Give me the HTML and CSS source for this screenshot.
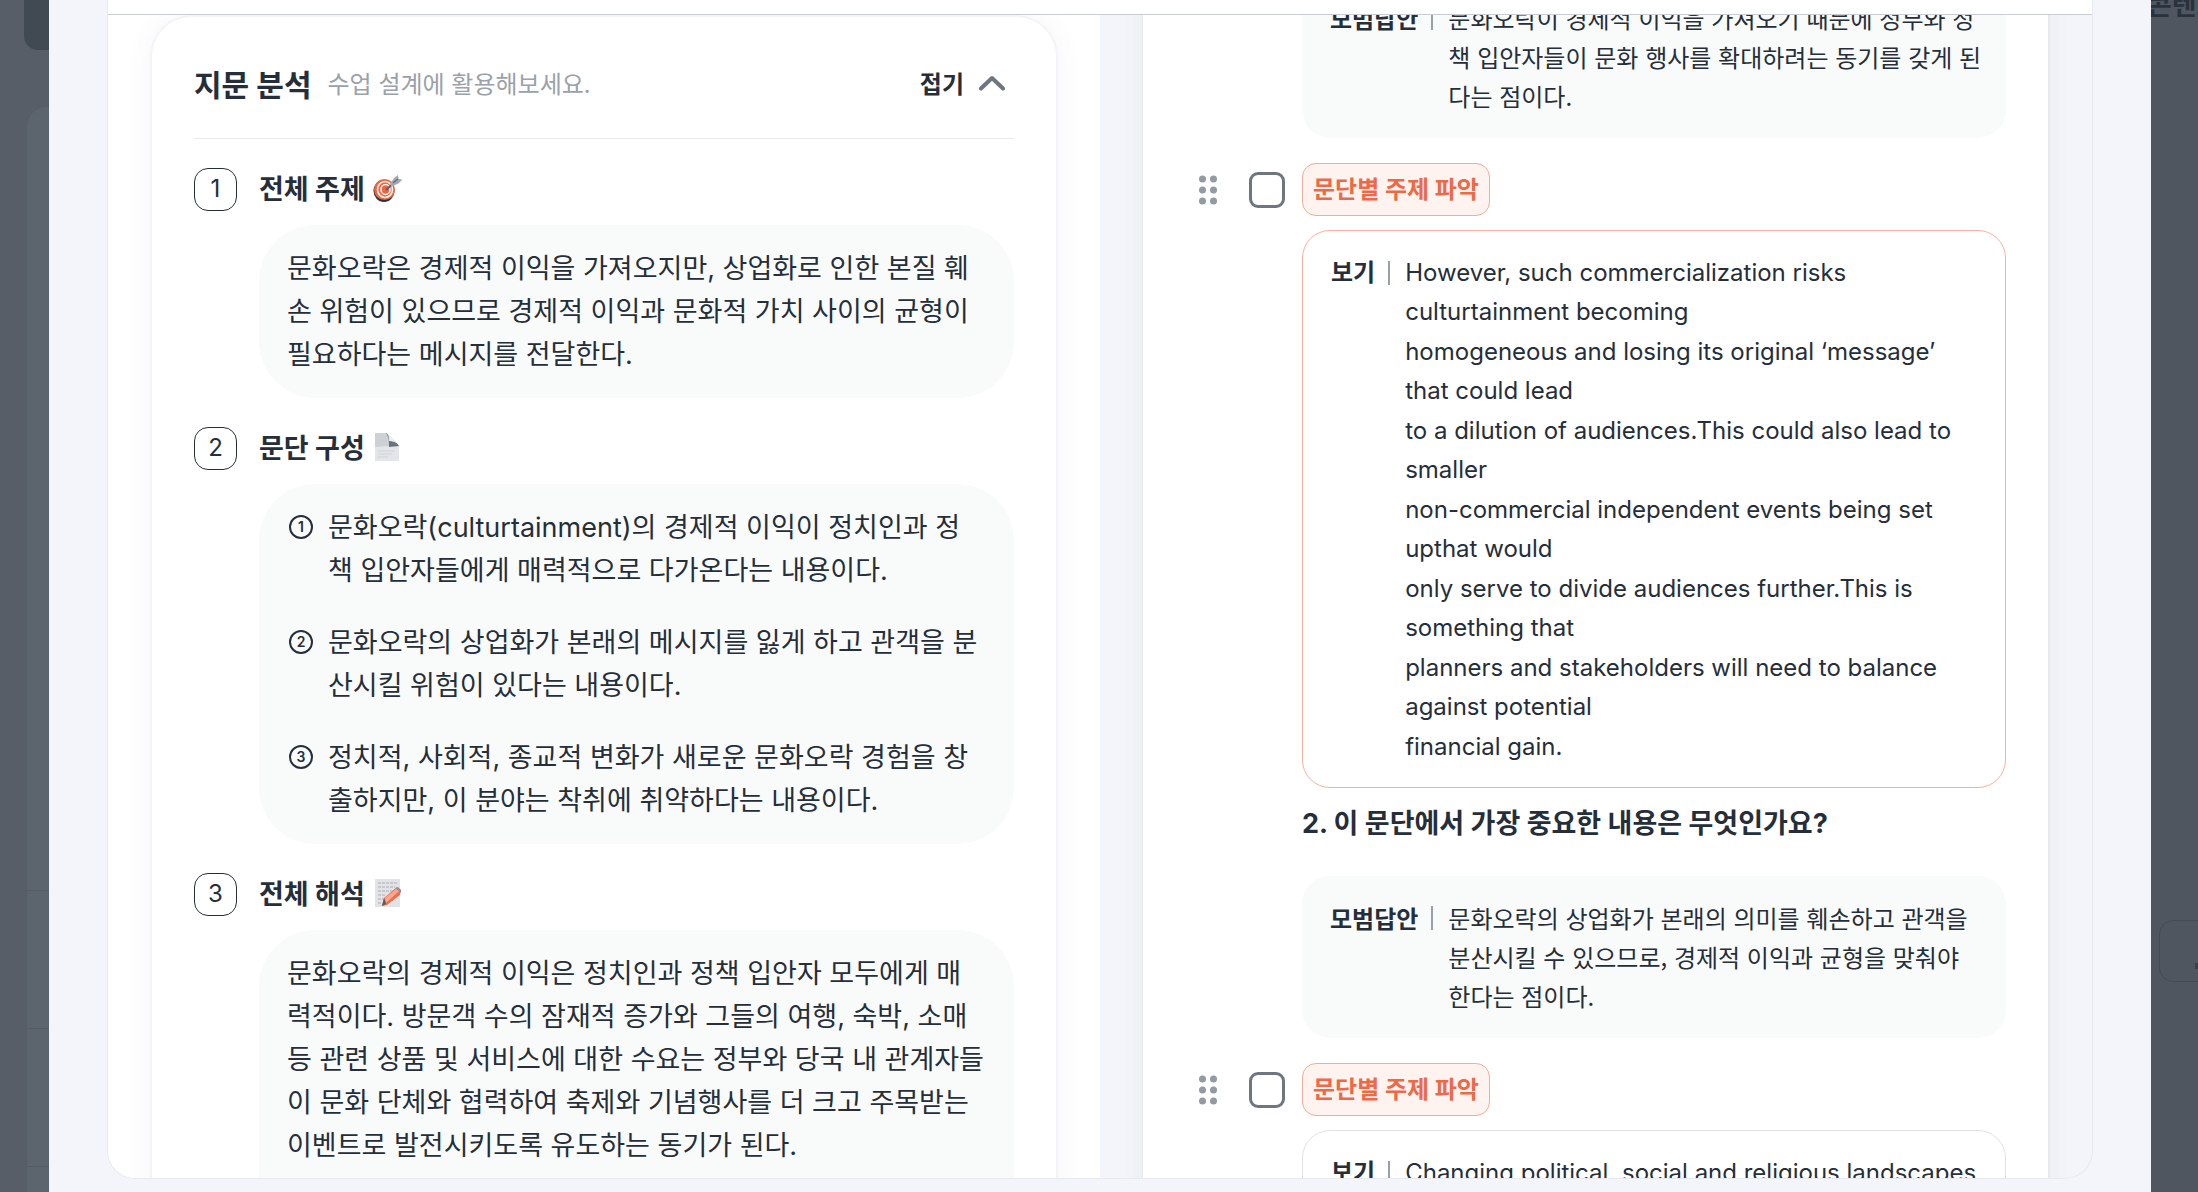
FILE: index.html
```html
<!DOCTYPE html>
<html lang="ko">
<head>
<meta charset="utf-8">
<meta name="viewport" content="width=device-width, initial-scale=1">
<title>지문 분석</title>
<link rel="stylesheet" href="styles.css">
</head>
<body>
<div class="screen">
  <div class="backdrop backdrop-left">
    <div class="dim-block"></div>
    <div class="dim-card">
      <div class="dim-row dim-row-tall"></div>
      <div class="dim-row"></div>
      <div class="dim-row"></div>
    </div>
  </div>

  <main class="modal">
    <div class="frame">
      <div class="frame-header"></div>
      <div class="columns">
        <section class="column column-left">
          <article class="card analysis">
            <header class="analysis-header">
              <h1 class="analysis-title">지문 분석</h1>
              <p class="analysis-hint">수업 설계에 활용해보세요.</p>
              <button class="fold" type="button">접기
                <svg class="chevron" viewBox="0 0 28 16" aria-hidden="true"><path d="M3 13.500L14 3l11 10.500" fill="none" stroke="#6d7681" stroke-width="4" stroke-linecap="round" stroke-linejoin="round"/></svg>
              </button>
            </header>
            <div class="sections">
              <section class="section">
                <span class="number">1</span>
                <h2 class="section-title">전체 주제
                  <svg class="emoji" viewBox="0 0 30 30" aria-hidden="true">
                    <ellipse cx="11" cy="18" rx="10.500" ry="11" fill="#2b333d"/>
                    <ellipse cx="11.500" cy="16.500" rx="10.500" ry="10.500" fill="#ee6540"/>
                    <ellipse cx="12" cy="16.500" rx="7.500" ry="8" fill="none" stroke="#fdf3ef" stroke-width="1.600"/>
                    <ellipse cx="12.500" cy="16.500" rx="4.500" ry="5" fill="none" stroke="#fdf3ef" stroke-width="1.600"/>
                    <path d="M13 17L23 8" stroke="#59636f" stroke-width="2"/>
                    <path d="M17 11l4-6 4-3 .500 4 4 .500-4 4-7 3z" fill="#a3aab3"/>
                    <path d="M20 10l5-4" stroke="#606a75" stroke-width="1.200"/>
                  </svg>
                </h2>
                <div class="note">
                  <p>문화오락은 경제적 이익을 가져오지만, 상업화로 인한 본질 훼<br>손 위험이 있으므로 경제적 이익과 문화적 가치 사이의 균형이<br>필요하다는 메시지를 전달한다.</p>
                </div>
              </section>

              <section class="section">
                <span class="number">2</span>
                <h2 class="section-title">문단 구성
                  <svg class="emoji" viewBox="0 0 30 30" aria-hidden="true">
                    <path d="M2 1h12l12 13v15H2z" fill="#e3e5e8"/>
                    <path d="M2 1h11c3 3 3 8 3 13L2 15z" fill="#cdd1d6"/>
                    <path d="M13 1c3 1 3 5 3 8 4 0 8 1 10 5l-10 1c0-6 0-10-3-14z" fill="#69727d"/>
                    <path d="M14 1l12 11c-3-2-6-3-9-3 0-3-1-6-3-8z" fill="#edeff1"/>
                    <path d="M5 19h17M5 22h14M5 25h10" stroke="#d0d3d8" stroke-width="1"/>
                  </svg>
                </h2>
                <ol class="note points">
                  <li class="point"><span class="ring">1</span><p>문화오락(culturtainment)의 경제적 이익이 정치인과 정<br>책 입안자들에게 매력적으로 다가온다는 내용이다.</p></li>
                  <li class="point"><span class="ring">2</span><p>문화오락의 상업화가 본래의 메시지를 잃게 하고 관객을 분<br>산시킬 위험이 있다는 내용이다.</p></li>
                  <li class="point"><span class="ring">3</span><p>정치적, 사회적, 종교적 변화가 새로운 문화오락 경험을 창<br>출하지만, 이 분야는 착취에 취약하다는 내용이다.</p></li>
                </ol>
              </section>

              <section class="section">
                <span class="number">3</span>
                <h2 class="section-title">전체 해석
                  <svg class="emoji" viewBox="0 0 30 30" aria-hidden="true">
                    <path d="M2 1h25v28H2z" fill="#e1e3e6"/>
                    <path d="M5 5h19M5 9h17M5 13h15M5 17h8M5 21h6M5 25h4" stroke="#a9afb7" stroke-width="1" stroke-dasharray="3 1"/>
                    <path d="M9 28l2-8L24 9l4 3-1 5-13 10z" fill="#ee6f4c"/>
                    <path d="M12 20L23 11l3 2-13 12z" fill="#fba68e"/>
                    <path d="M9 28l2-8 2 6z" fill="#525b66"/>
                    <path d="M23 10l2-1 3 3v3z" fill="#8d949d"/>
                  </svg>
                </h2>
                <div class="note note-open">
                  <p>문화오락의 경제적 이익은 정치인과 정책 입안자 모두에게 매<br>력적이다. 방문객 수의 잠재적 증가와 그들의 여행, 숙박, 소매<br>등 관련 상품 및 서비스에 대한 수요는 정부와 당국 내 관계자들<br>이 문화 단체와 협력하여 축제와 기념행사를 더 크고 주목받는<br>이벤트로 발전시키도록 유도하는 동기가 된다.</p>
                </div>
              </section>
            </div>
          </article>
        </section>

        <section class="column column-right">
          <div class="card questions">
            <article class="question question-scrolled">
              <div class="answer">
                <strong class="label">모범답안</strong>
                <p>문화오락이 경제적 이익을 가져오기 때문에 정부와 정<br>책 입안자들이 문화 행사를 확대하려는 동기를 갖게 된<br>다는 점이다.</p>
              </div>
            </article>

            <article class="question">
              <svg class="handle" viewBox="0 0 18 30" aria-hidden="true"><g fill="#929aa4"><circle cx="3.500" cy="4" r="3.500"/><circle cx="14.500" cy="4" r="3.500"/><circle cx="3.500" cy="15" r="3.500"/><circle cx="14.500" cy="15" r="3.500"/><circle cx="3.500" cy="26" r="3.500"/><circle cx="14.500" cy="26" r="3.500"/></g></svg>
              <input class="check" type="checkbox" id="question-2">
              <label class="tag" for="question-2">문단별 주제 파악</label>
              <div class="quote quote-active">
                <strong class="label">보기</strong>
                <div class="passage" lang="en">
                  <p>However, such commercialization risks<br>culturtainment becoming</p>
                  <p>homogeneous and losing its original ‘message’<br>that could lead</p>
                  <p>to a dilution of audiences.This could also lead to<br>smaller</p>
                  <p>non-commercial independent events being set<br>upthat would</p>
                  <p>only serve to divide audiences further.This is<br>something that</p>
                  <p>planners and stakeholders will need to balance<br>against potential</p>
                  <p>financial gain.</p>
                </div>
              </div>
              <h2 class="prompt">2. 이 문단에서 가장 중요한 내용은 무엇인가요?</h2>
              <div class="answer">
                <strong class="label">모범답안</strong>
                <p>문화오락의 상업화가 본래의 의미를 훼손하고 관객을<br>분산시킬 수 있으므로, 경제적 이익과 균형을 맞춰야<br>한다는 점이다.</p>
              </div>
            </article>

            <article class="question">
              <svg class="handle" viewBox="0 0 18 30" aria-hidden="true"><g fill="#929aa4"><circle cx="3.500" cy="4" r="3.500"/><circle cx="14.500" cy="4" r="3.500"/><circle cx="3.500" cy="15" r="3.500"/><circle cx="14.500" cy="15" r="3.500"/><circle cx="3.500" cy="26" r="3.500"/><circle cx="14.500" cy="26" r="3.500"/></g></svg>
              <input class="check" type="checkbox" id="question-3">
              <label class="tag" for="question-3">문단별 주제 파악</label>
              <div class="quote">
                <strong class="label">보기</strong>
                <div class="passage" lang="en">
                  <p>Changing political, social and religious landscapes</p>
                </div>
              </div>
            </article>
          </div>
        </section>
      </div>
    </div>
  </main>

  <div class="backdrop backdrop-right">
    <p class="dim-heading">콘텐츠</p>
    <div class="dim-button"><span class="dim-glyph"></span></div>
  </div>
</div>
</body>
</html>
```
FILE: styles.css
```css
* {
  box-sizing: border-box;
}

body,
h1,
h2,
p,
ol {
  margin: 0;
  padding: 0;
}

body {
  font-family: Inter, "Noto Sans CJK KR", sans-serif;
  font-size: 24px;
  color: #252e39;
  background: #555d66;
}

.screen {
  display: flex;
  height: 100vh;
  overflow: hidden;
}

/* Dimmed page behind the modal */
.backdrop {
  flex: none;
  display: flex;
  flex-direction: column;
  overflow: hidden;
}

.backdrop-left {
  width: 49px;
  padding-left: 24px;
  background: #575e67;
}

.backdrop-right {
  width: 47px;
  background: #4f5660;
}

.dim-block {
  height: 50px;
  flex: none;
  border-bottom-left-radius: 14px;
  background: #414952;
}

.dim-card {
  flex: 1;
  margin: 57px 0 0 3px;
  border-top-left-radius: 20px;
  background: #5c646d;
}

.dim-row {
  height: 138px;
  border-bottom: 1px solid #555c65;
}

.dim-row-tall {
  height: 784px;
}

.dim-heading {
  width: 120px;
  margin: -14px 0 0 -4px;
  font-size: 27px;
  font-weight: 700;
  line-height: 40px;
  color: #29323d;
}

.dim-button {
  flex: none;
  display: flex;
  align-items: center;
  width: 120px;
  height: 62px;
  margin: 894px 0 0 8px;
  padding: 30px 0 0 35px;
  border: 1px solid #434b55;
  border-radius: 14px;
}

.dim-glyph {
  width: 16px;
  height: 6px;
  background: #3a424c;
}

/* Modal */
.modal {
  flex: 1;
  min-width: 0;
  padding: 0 58px 13px;
  background: #f3f5fa;
}

.frame {
  display: flex;
  flex-direction: column;
  height: 100%;
  overflow: hidden;
  border: 1px solid #e6e9ee;
  border-top: 0;
  border-radius: 0 0 28px 28px;
}

.frame-header {
  flex: none;
  height: 15px;
  border-bottom: 1px solid #c9cdd2;
  background: #fff;
}

.columns {
  flex: 1;
  min-height: 0;
  display: grid;
  grid-template-columns: 1fr 1fr;
}

.column {
  min-width: 0;
  min-height: 0;
  overflow: hidden;
}

.column-left {
  padding: 0 42px;
  background: #fff;
}

.column-right {
  padding: 0 42px;
}

.card {
  background: #fff;
  box-shadow: 0 0 28px rgba(60, 80, 110, 0.06);
}

/* Passage analysis */
.analysis {
  padding: 0 42px;
  border: 2px solid #f2f4f8;
  border-radius: 42px 42px 0 0;
}

.analysis-header {
  display: flex;
  align-items: center;
  gap: 16px;
  height: 122px;
  padding-top: 10px;
  border-bottom: 1px solid #e7e9ec;
}

.analysis-title {
  font-size: 30px;
  font-weight: 700;
}

.analysis-hint {
  font-family: "Noto Sans CJK KR", sans-serif;
  color: #9aa1aa;
}

.fold {
  display: flex;
  align-items: center;
  gap: 14px;
  margin-left: auto;
  padding: 0 8px 0 0;
  border: 0;
  background: none;
  font: inherit;
  font-weight: 700;
  color: inherit;
}

.chevron {
  width: 28px;
  height: 16px;
}

.sections {
  display: flex;
  flex-direction: column;
  gap: 29px;
  padding-top: 29px;
}

.section {
  display: grid;
  grid-template-columns: 43px 1fr;
  gap: 14px 22px;
}

.number {
  display: flex;
  align-items: center;
  justify-content: center;
  height: 43px;
  padding-bottom: 2px;
  border: 1px solid #252e39;
  border-radius: 14px;
}

.section-title {
  display: flex;
  align-items: center;
  gap: 8px;
  height: 43px;
  padding-bottom: 4px;
  font-size: 27px;
  font-weight: 700;
}

.emoji {
  width: 30px;
  height: 30px;
}

.note {
  grid-column: 2;
  padding: 22px 28px;
  border-radius: 56px;
  font-size: 27px;
  line-height: 43px;
  white-space: nowrap;
  background: #f9fbfb;
}

.note-open {
  padding-bottom: 86px;
}

.points {
  display: flex;
  flex-direction: column;
  gap: 29px;
  list-style: none;
}

.point {
  display: flex;
  gap: 15px;
}

.ring {
  flex: none;
  width: 24px;
  height: 24px;
  margin: 9px 0 0 2px;
  border: 2px solid #252e39;
  border-radius: 50%;
  font-size: 14px;
  font-weight: 600;
  line-height: 20px;
  text-align: center;
}

/* Questions */
.questions {
  min-height: 100%;
  padding: 0 42px 0 56px;
  border: solid #e6e9ee;
  border-width: 0 2px 0 1px;
}

.question {
  display: grid;
  grid-template-columns: 50px 53px minmax(0, 1fr);
  align-items: center;
  margin-bottom: 25px;
}

.question-scrolled {
  margin-top: -39px;
}

.handle {
  width: 18px;
  height: 30px;
}

.check {
  appearance: none;
  width: 36px;
  height: 36px;
  margin: 0;
  border: 3px solid #6d7681;
  border-radius: 9px;
  background: #fff;
}

.tag {
  justify-self: start;
  height: 53px;
  padding: 0 10px;
  border: 1px solid #f4ab97;
  border-radius: 14px;
  font-weight: 700;
  line-height: 51px;
  color: #ec6a48;
  background: #fef3ef;
}

.quote,
.answer {
  grid-column: 3;
  display: flex;
  line-height: 39px;
  white-space: nowrap;
  border-radius: 28px;
}

.quote {
  margin-top: 14px;
  padding: 22px 28px 21px;
  border: 1px solid #dfe1e4;
}

.quote-active {
  border-color: #f7b09c;
}

.answer {
  padding: 22px 28px 23px;
  font-family: "Noto Sans CJK KR", sans-serif;
  background: #f9fbfb;
}

.label {
  display: flex;
  align-items: center;
  gap: 13px;
  height: 39px;
  margin-right: 15px;
  font-weight: 700;
}

.label::after {
  content: "";
  width: 2px;
  height: 24px;
  background: #98a0aa;
}

.passage {
  display: grid;
  gap: 1px;
}

.prompt {
  grid-column: 3;
  padding: 16px 0 32px;
  font-size: 27px;
  font-weight: 700;
  line-height: 40px;
}
```
